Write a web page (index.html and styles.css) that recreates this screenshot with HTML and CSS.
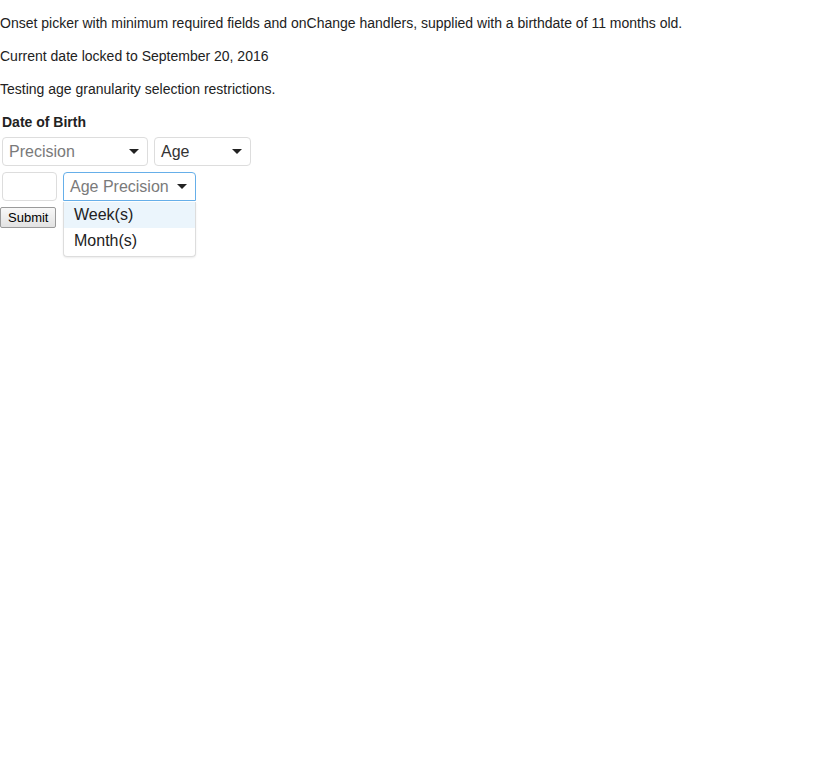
FILE: index.html
```html
<!DOCTYPE html>
<html>
<head>
<meta charset="utf-8">
<link rel="stylesheet" href="styles.css">
</head>
<body>
<p class="note">Onset picker with minimum required fields and onChange handlers, supplied with a birthdate of 11 months old.</p>
<p class="note">Current date locked to September 20, 2016</p>
<p class="note">Testing age granularity selection restrictions.</p>
<div class="field">
  <label class="field-label">Date of Birth</label>
  <div class="row">
    <div class="select w-precision"><span class="placeholder">Precision</span><span class="arrow"></span></div>
    <div class="select w-age"><span class="value">Age</span><span class="arrow"></span></div>
  </div>
  <div class="row">
    <input class="num" type="text">
    <div class="select-wrap">
      <div class="select w-ageprec focused"><span class="placeholder">Age Precision</span><span class="arrow"></span></div>
      <div class="menu">
        <div class="option active">Week(s)</div>
        <div class="option">Month(s)</div>
      </div>
    </div>
  </div>
</div>
<button class="submit" type="button">Submit</button>
</body>
</html>
```

FILE: styles.css
```css
html, body {
  margin: 0;
  padding: 0;
  background: #fff;
}
body {
  font-family: "Liberation Sans", Arial, sans-serif;
  font-size: 14px;
  line-height: 19px;
  color: #222;
  min-height: 100vh;
}
.note {
  margin: 14px 0;
}
.field {
  margin: 14px 0 0 2px;
}
.field-label {
  display: block;
  font-weight: bold;
  margin-bottom: 5px;
  color: #222;
}
.row {
  display: flex;
  gap: 6px;
  margin-bottom: 6px;
}
.select {
  box-sizing: border-box;
  height: 29px;
  border: 1px solid #ddd;
  border-radius: 4px;
  display: flex;
  align-items: center;
  justify-content: space-between;
  padding: 0 8px 0 6px;
  font-size: 16px;
  background: #fff;
}
.w-precision { width: 146px; }
.w-age { width: 97px; }
.w-ageprec { width: 133px; }
.focused {
  border-color: #66afe9;
  border-radius: 4px 4px 0 0;
}
.placeholder { color: #7a7a7a; }
.value { color: #333; }
.arrow {
  width: 0;
  height: 0;
  border-left: 5px solid transparent;
  border-right: 5px solid transparent;
  border-top: 5px solid #222;
}
.num {
  box-sizing: border-box;
  width: 55px;
  height: 29px;
  border: 1px solid #ddd;
  border-radius: 4px;
  margin: 0;
  padding: 0 4px;
  font-size: 16px;
}
.select-wrap {
  position: relative;
}
.menu {
  position: absolute;
  top: 30px;
  left: 0;
  box-sizing: border-box;
  width: 133px;
  background: #fff;
  border: 1px solid #ddd;
  border-top: none;
  border-radius: 0 0 4px 4px;
  box-shadow: 0 1px 2px rgba(0,0,0,0.08);
  padding-bottom: 2px;
  z-index: 2;
}
.option {
  height: 26px;
  line-height: 26px;
  padding: 0 10px;
  font-size: 16px;
  color: #222;
}
.option.active {
  background: #ebf5fc;
}
.submit {
  margin: 0;
  font-family: "Liberation Sans", Arial, sans-serif;
  font-size: 13px;
  height: 21px;
  padding: 0 7px;
  border: 1px solid #9a9a9a;
  border-radius: 2px;
  background: linear-gradient(#f8f8f8, #e2e2e2);
  color: #000;
}
```
